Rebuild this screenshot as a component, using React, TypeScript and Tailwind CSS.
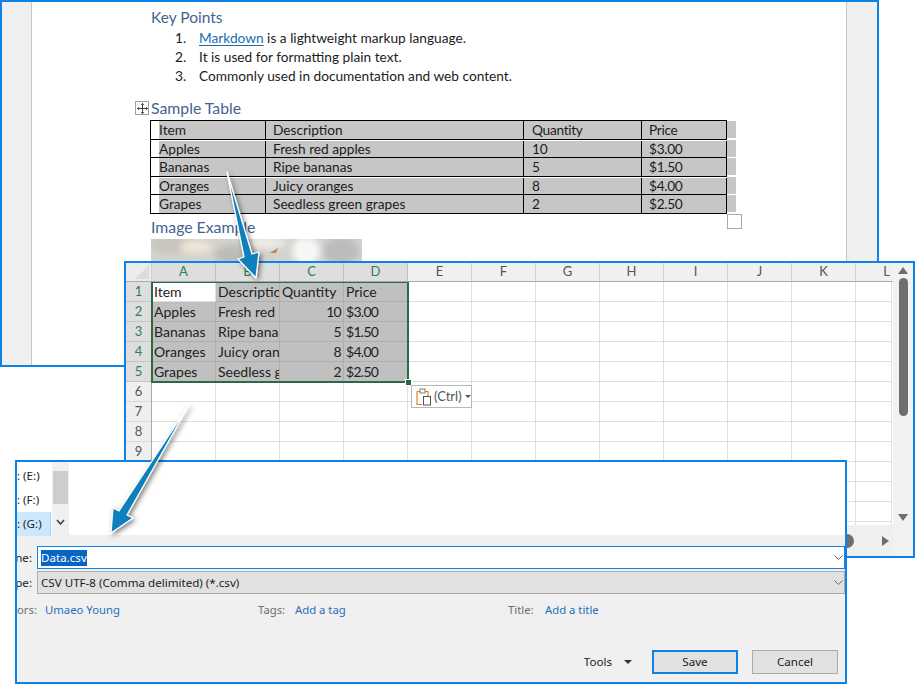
import React from "react";

const COLS = ["A", "B", "C", "D", "E", "F", "G", "H", "I", "J", "K", "L"];
const ROWS = [1, 2, 3, 4, 5, 6, 7, 8, 9, 10, 11, 12, 13];
const WORD_ROWS = [
  ["Item", "Description", "Quantity", "Price"],
  ["Apples", "Fresh red apples", "10", "$3.00"],
  ["Bananas", "Ripe bananas", "5", "$1.50"],
  ["Oranges", "Juicy oranges", "8", "$4.00"],
  ["Grapes", "Seedless green grapes", "2", "$2.50"],
];
const WORD_H = ["h-[19px]", "h-[18px] pt-[1px]", "h-[19px]", "h-[18px] pt-[1px]", "h-[19px]"];
const XL: string[][] = [
  ["Item", "Descriptio", "Quantity", "Price"],
  ["Apples", "Fresh red", "10", "$3.00"],
  ["Bananas", "Ripe bana", "5", "$1.50"],
  ["Oranges", "Juicy oran", "8", "$4.00"],
  ["Grapes", "Seedless g", "2", "$2.50"],
];

function WordPicture() {
  return (
    <svg className="block" width="211" height="30" viewBox="0 0 211 30">
      <defs>
        <filter id="picBlur" x="-20%" y="-20%" width="140%" height="140%">
          <feGaussianBlur stdDeviation="3" />
        </filter>
      </defs>
      <rect width="211" height="30" fill="#d4d2cd" />
      <g filter="url(#picBlur)">
        <ellipse cx="20" cy="6" rx="22" ry="9" fill="#c9c6bf" />
        <ellipse cx="45" cy="8" rx="16" ry="6" fill="#efe7d6" />
        <ellipse cx="85" cy="16" rx="22" ry="10" fill="#bdbbb6" />
        <ellipse cx="115" cy="4" rx="20" ry="6" fill="#ecebe8" />
        <ellipse cx="155" cy="12" rx="14" ry="14" fill="#f7f7f7" />
        <ellipse cx="190" cy="12" rx="18" ry="14" fill="#bcbcbc" />
      </g>
      <path d="M119 14 L127 9 L125 14 Z" fill="#b98a3c" />
    </svg>
  );
}

function WordWindow() {
  return (
    <div className="absolute left-0 top-0 w-[879px] h-[367px] border-2 border-[#0f82e6] bg-[#f0f0f0] overflow-hidden font-['Lato',sans-serif]">
      <div className="ml-[29px] w-[816px] h-full bg-white border-x border-[#c6c6c6] relative pl-[119px]">
        <h2 className="pt-[5px] h-[27px] text-[15.5px] leading-[20px] text-[#44648f]">Key Points</h2>
        <ol className="text-[13.7px] text-[#1c1c1c]">
          <li className="flex h-[19px] items-center">
            <span className="w-[48px] pl-[24px]">1.</span>
            <span>
              <span className="text-[#1a6bb0] underline underline-offset-2">Markdown</span> is a lightweight markup language.
            </span>
          </li>
          <li className="flex h-[19px] items-center">
            <span className="w-[48px] pl-[24px]">2.</span>
            <span>It is used for formatting plain text.</span>
          </li>
          <li className="flex h-[19px] items-center">
            <span className="w-[48px] pl-[24px]">3.</span>
            <span>Commonly used in documentation and web content.</span>
          </li>
        </ol>
        <h2 className="mt-[12px] h-[20px] text-[15.8px] leading-[20px] text-[#44648f] relative">
          Sample Table
          <span className="absolute left-[-16px] top-[3px] w-[14px] h-[14px] border border-[#a0a0a0] bg-white flex items-center justify-center">
            <svg width="11" height="11" viewBox="0 0 12 12" fill="none" stroke="#333" strokeWidth="1">
              <path d="M6 0.5V11.5M0.5 6H11.5M4.5 2L6 0.5L7.5 2M4.5 10L6 11.5L7.5 10M2 4.5L0.5 6L2 7.5M10 4.5L11.5 6L10 7.5" />
            </svg>
          </span>
        </h2>
        <div className="relative -ml-[1px] mt-[2px] w-[577px] text-[13.7px] text-[#1c1c1c] border-t border-l border-black">
          {WORD_ROWS.map((r, i) => (
            <div key={i} className={`relative flex ${WORD_H[i]} border-b border-black`}>
              <div className="w-[115px] border-r border-black pl-[8px] flex items-center">
                <span className="bg-[#c6c6c6] w-full h-full flex items-center">{r[0]}</span>
              </div>
              <div className="w-[258px] border-r border-black bg-[#c6c6c6] flex items-center pl-[7px]">{r[1]}</div>
              <div className="w-[118px] border-r border-black pl-[8px] bg-[#c6c6c6] flex items-center tracking-[-0.3px]">{r[2]}</div>
              <div className="w-[85px] border-r border-black pl-[7px] bg-[#c6c6c6] flex items-center tracking-[-0.3px]">{r[3]}</div>
              <div className="absolute left-[576px] top-0 w-[9px] bg-[#c6c6c6] h-[17px]" />
            </div>
          ))}
          <div className="absolute left-[576px] top-[93px] w-[15px] h-[15px] border border-[#a8a8a8] bg-white" />
        </div>
        <h2 className="mt-[3px] h-[22px] text-[15.8px] leading-[20px] text-[#44648f]">Image Example</h2>
        <WordPicture />
      </div>
    </div>
  );
}

function ExcelWindow() {
  return (
    <div className="absolute left-[124px] top-[261px] w-[791px] h-[297px] border-2 border-[#0f82e6] bg-[#f0f0f0] flex overflow-hidden font-['Lato',sans-serif]">
      <div className="w-[767px] shrink-0 flex flex-col">
        <div className="flex h-[19px] shrink-0 border-b border-[#ababab] text-[13px]">
          <div className="w-[26px] shrink-0 border-r border-[#d0d0d0] relative overflow-hidden bg-[#ececec]">
            <div className="absolute right-[2px] bottom-[2px] w-0 h-0 border-l-[14px] border-l-transparent border-b-[14px] border-b-[#dcdcdc]" />
          </div>
          {COLS.map((c, i) => (
            <div
              key={c}
              className={`shrink-0 flex items-center border-r ${
                c === "L" ? "w-[36px] justify-end pr-[1px] border-transparent" : "w-[64px] justify-center"
              } ${i < 4 ? "bg-[#dedede] text-[#2f7d55] border-[#c0c0c0]" : "text-[#555] border-[#d4d4d4]"}`}
            >
              {c}
            </div>
          ))}
        </div>
        <div className="flex-1 flex relative min-h-0 overflow-hidden">
          <div className="w-[26px] shrink-0 border-r border-[#ababab] text-[13px] bg-[#efefef]">
            {ROWS.map((r) => (
              <div
                key={r}
                className={`h-[20px] pt-[1px] border-b flex items-center justify-center ${
                  r <= 5 ? "bg-[#dedede] text-[#2f7d55] border-[#c4c4c4]" : "text-[#555] border-[#dadada]"
                }`}
              >
                {r < 10 ? r : ""}
              </div>
            ))}
          </div>
          <div className="flex-1 bg-white relative min-w-0">
            {ROWS.map((r, ri) => (
              <div key={r} className="flex h-[20px] text-[14px] text-[#222]">
                {COLS.map((c, ci) => {
                  const inData = ri < 5 && ci < 4;
                  const val = inData ? XL[ri][ci] : "";
                  const white = ri === 0 && ci === 0;
                  const right = ci === 2 && ri > 0;
                  const numeric = ri > 0 && ci >= 2;
                  return (
                    <div
                      key={c}
                      className={`${c === "L" ? "w-[36px]" : "w-[64px]"} shrink-0 border-r border-b overflow-hidden whitespace-nowrap flex items-center px-[2px] ${
                        right ? "justify-end" : ""
                      } ${numeric ? "tracking-[-0.7px]" : ""} ${inData && !white ? "bg-[#c0c0c0] border-[#adadad]" : "border-[#dfdfdf]"}`}
                    >
                      {val}
                    </div>
                  );
                })}
              </div>
            ))}
            <div className="absolute left-[-1px] top-[-1px] w-[258px] h-[102px] border-2 border-[#2c6a47]" />
            <div className="absolute left-[254px] top-[98px] w-[5px] h-[5px] bg-[#2c6a47] outline outline-1 outline-white" />
            <div className="absolute left-[259px] top-[103px] w-[61px] h-[23px] border border-[#b8b8b8] bg-white flex items-center pl-[4px] gap-[2px] text-[13px] text-[#555]">
              <svg width="16" height="18" viewBox="0 0 16 18" fill="none">
                <path d="M1 3.5H12V8M1 3.5V16.5H6" stroke="#d08a25" strokeWidth="1.2" />
                <rect x="4" y="1" width="5" height="4" fill="#fff" stroke="#8a7a60" />
                <rect x="7.5" y="8.5" width="7" height="8.5" fill="#fff" stroke="#555" />
              </svg>
              <span>(Ctrl)</span>
              <span className="ml-[1px] w-0 h-0 border-x-[3px] border-x-transparent border-t-[3px] border-t-[#555]" />
            </div>
          </div>
        </div>
        <div className="h-[31px] shrink-0 flex items-center justify-end pr-[2px] bg-[#efefef]">
          <div className="w-[14px] h-[14px] rounded-full bg-[#6e6e6e] mr-[28px]" />
          <div className="w-0 h-0 border-y-[5px] border-y-transparent border-l-[7px] border-l-[#6e6e6e] mr-[2px]" />
        </div>
      </div>
      <div className="w-[20px] flex flex-col items-center pt-[4px] bg-[#f2f2f2]">
        <div className="w-0 h-0 border-x-[5px] border-x-transparent border-b-[7px] border-b-[#6e6e6e]" />
        <div className="mt-[4px] w-[9px] h-[138px] rounded-full bg-[#6e6e6e]" />
        <div className="mt-[98px] w-0 h-0 border-x-[5px] border-x-transparent border-t-[7px] border-t-[#6e6e6e]" />
      </div>
    </div>
  );
}

function SaveDialog() {
  return (
    <div className="absolute left-[15px] top-[460px] w-[832px] h-[224px] border-2 border-[#0f82e6] bg-[#f0f0f0] overflow-hidden font-['Noto_Sans',sans-serif] text-[11.6px] flex flex-col">
      <div className="h-[73px] shrink-0 bg-white flex">
        <div className="w-[34px] pt-[2px] text-[#222]">
          <div className="h-[24px] flex items-center whitespace-pre">: (E:)</div>
          <div className="h-[24px] flex items-center whitespace-pre">: (F:)</div>
          <div className="h-[24px] flex items-center whitespace-pre bg-[#cce8ff] border-r border-[#99d1ff]">: (G:)</div>
        </div>
        <div className="w-[17px] bg-[#f0f0f0] flex flex-col items-center pt-[9px] ml-[1px]">
          <div className="w-[15px] h-[33px] bg-[#cdcdcd]" />
          <svg className="mt-[15px]" width="9" height="7" viewBox="0 0 9 7" fill="none" stroke="#444" strokeWidth="1.6">
            <path d="M1 1L4.5 5L8 1" />
          </svg>
        </div>
      </div>
      <div className="pt-[11px]">
        <div className="flex items-center h-[23px]">
          <span className="w-[15px] mr-[5px] flex justify-end text-[#222]">ne:</span>
          <div className="flex-1 h-[23px] border border-[#0f82e6] bg-white flex items-center pl-[3px] pr-[1px] justify-between">
            <span className="bg-[#0a64c2] text-white leading-[16px]">Data.csv</span>
            <svg width="9" height="6" viewBox="0 0 9 6" fill="none" stroke="#666"><path d="M0.5 0.5L4.5 4.5L8.5 0.5" /></svg>
          </div>
        </div>
        <div className="flex items-center h-[23px] mt-[2px]">
          <span className="w-[15px] mr-[5px] flex justify-end text-[#222]">pe:</span>
          <div className="flex-1 h-[23px] border border-[#ababab] bg-[#e1e1e1] text-[#222] flex items-center pl-[3px] pr-[1px] justify-between">
            <span>CSV UTF-8 (Comma delimited) (*.csv)</span>
            <svg width="9" height="6" viewBox="0 0 9 6" fill="none" stroke="#666"><path d="M0.5 0.5L4.5 4.5L8.5 0.5" /></svg>
          </div>
        </div>
        <div className="flex items-center h-[18px] mt-[7px] text-[11.3px] text-[#6f6f6f]">
          <span className="w-[28px]">ors:</span>
          <span className="w-[213px] text-[#1f6fbd]">Umaeo Young</span>
          <span className="w-[37px]">Tags:</span>
          <span className="w-[213px] text-[#1f6fbd]">Add a tag</span>
          <span className="w-[37px]">Title:</span>
          <span className="text-[#1f6fbd]">Add a title</span>
        </div>
      </div>
      <div className="flex items-center justify-end pr-[7px] mt-[31px] text-[#222]">
        <span>Tools</span>
        <span className="ml-[12px] mr-[20px] w-0 h-0 border-x-[4px] border-x-transparent border-t-[4px] border-t-[#333]" />
        <div className="w-[86px] h-[24px] border-2 border-[#0f82e6] bg-[#e1e1e1] flex items-center justify-center">Save</div>
        <div className="ml-[14px] w-[86px] h-[24px] border border-[#ababab] bg-[#e1e1e1] flex items-center justify-center">Cancel</div>
      </div>
    </div>
  );
}

function Arrow({ points }: { points: string }) {
  return (
    <svg className="absolute left-0 top-0 z-10 pointer-events-none" width="915" height="684" viewBox="0 0 915 684">
      <defs>
        <filter id="arrowShadow" x="-40%" y="-20%" width="200%" height="140%">
          <feDropShadow dx="2" dy="2" stdDeviation="2.5" floodColor="#000" floodOpacity="0.5" />
        </filter>
      </defs>
      <polygon points={points} fill="#0a80bd" stroke="#ffffff" strokeWidth="1.3" strokeLinejoin="round" filter="url(#arrowShadow)" />
    </svg>
  );
}

export default function App() {
  return (
    <div className="relative w-[915px] h-[684px] bg-white overflow-hidden">
      <WordWindow />
      <ExcelWindow />
      <SaveDialog />
      <Arrow points="227,172 252,254 259,252 256,278 238,259 244,257" />
      <Arrow points="189,405 127,515 133,518 111,533 113,508 119,511" />
    </div>
  );
}
